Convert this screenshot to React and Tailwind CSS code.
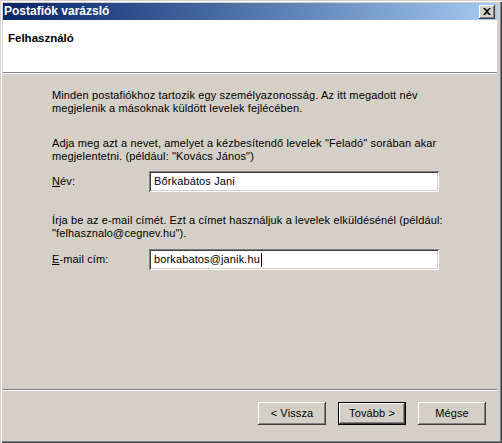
import React from "react";

const raised =
  "shadow-[inset_-1px_-1px_0_#404040,inset_1px_1px_0_#ffffff,inset_-2px_-2px_0_#808080,inset_2px_2px_0_#d4d0c8]";
const sunken =
  "shadow-[inset_1px_1px_0_#808080,inset_-1px_-1px_0_#ffffff,inset_2px_2px_0_#404040,inset_-2px_-2px_0_#d4d0c8]";

function Field({ value, caret }) {
  return (
    <div className={`w-[290px] h-[21px] bg-white ${sunken} flex items-center pl-[5px]`}>
      <span className="whitespace-nowrap">{value}</span>
      {caret && <span className="w-px h-[14px] bg-black ml-px" />}
    </div>
  );
}

function Button({ children, isDefault }) {
  if (isDefault) {
    return (
      <div className="w-[68px] h-[23px] border border-black">
        <div className={`w-full h-full bg-[#d4d0c8] ${raised} flex items-center justify-center`}>
          {children}
        </div>
      </div>
    );
  }
  return (
    <div className={`w-[68px] h-[23px] bg-[#d4d0c8] ${raised} flex items-center justify-center`}>
      {children}
    </div>
  );
}

export default function App() {
  return (
    <div
      className="w-[502px] h-[443px] bg-[#d4d0c8] flex flex-col pt-[3px] pl-[3px] pr-[5px] pb-[4px] shadow-[inset_1px_1px_0_#d4d0c8,inset_2px_2px_0_#ffffff,inset_-1px_-1px_0_#404040,inset_-2px_-2px_0_#808080] text-[11px] leading-[13px] tracking-[0.13px] text-black"
      style={{ fontFamily: '"Liberation Sans", Arial, sans-serif' }}
    >
      {/* title bar */}
      <div className="h-[17px] flex items-center justify-between pl-[1px] pr-[2px] bg-gradient-to-r from-[#0a246a] to-[#a6caf0]">
        <span className="text-white font-bold text-[12px] tracking-normal">Postafiók varázsló</span>
        <div className={`w-[16px] h-[14px] bg-[#d4d0c8] ${raised} flex items-center justify-center`}>
          <svg width="8" height="7" viewBox="0 0 8 7">
            <path d="M0 0h2l2 2 2-2h2L5 3.5 8 7H6L4 5 2 7H0l3-3.5z" fill="#000" />
          </svg>
        </div>
      </div>

      {/* header */}
      <div className="h-[52px] bg-white pl-[5px] pt-[12px]">
        <span className="font-bold text-[11.5px] tracking-normal">Felhasználó</span>
      </div>
      <div className="h-px bg-[#808080]" />
      <div className="h-px bg-white" />

      {/* body */}
      <div className="flex-1 pl-[49px] pt-[15px]">
        <p className="whitespace-nowrap">
          Minden postafiókhoz tartozik egy személyazonosság. Az itt megadott név
          <br />
          megjelenik a másoknak küldött levelek fejlécében.
        </p>
        <p className="whitespace-nowrap mt-[22px]">
          Adja meg azt a nevet, amelyet a kézbesítendő levelek "Feladó" sorában akar
          <br />
          megjelentetni. (például: "Kovács János")
        </p>
        <div className="flex items-center mt-[8px]">
          <span className="w-[97px]">
            <span className="underline">N</span>év:
          </span>
          <Field value="Bőrkabátos Jani" />
        </div>
        <p className="whitespace-nowrap mt-[22px]">
          Írja be az e-mail címét. Ezt a címet használjuk a levelek elküldésénél (például:
          <br />
          "felhasznalo@cegnev.hu").
        </p>
        <div className="flex items-center mt-[9px]">
          <span className="w-[97px]">
            <span className="underline">E</span>-mail cím:
          </span>
          <Field value="borkabatos@janik.hu" caret />
        </div>
      </div>

      {/* footer */}
      <div className="h-px bg-[#808080]" />
      <div className="h-px bg-white" />
      <div className="h-[48px] flex items-start justify-end gap-[12px] pt-[11px] pr-[11px]">
        <Button>&lt; Vissza</Button>
        <Button isDefault>Tovább &gt;</Button>
        <Button>Mégse</Button>
      </div>
    </div>
  );
}
